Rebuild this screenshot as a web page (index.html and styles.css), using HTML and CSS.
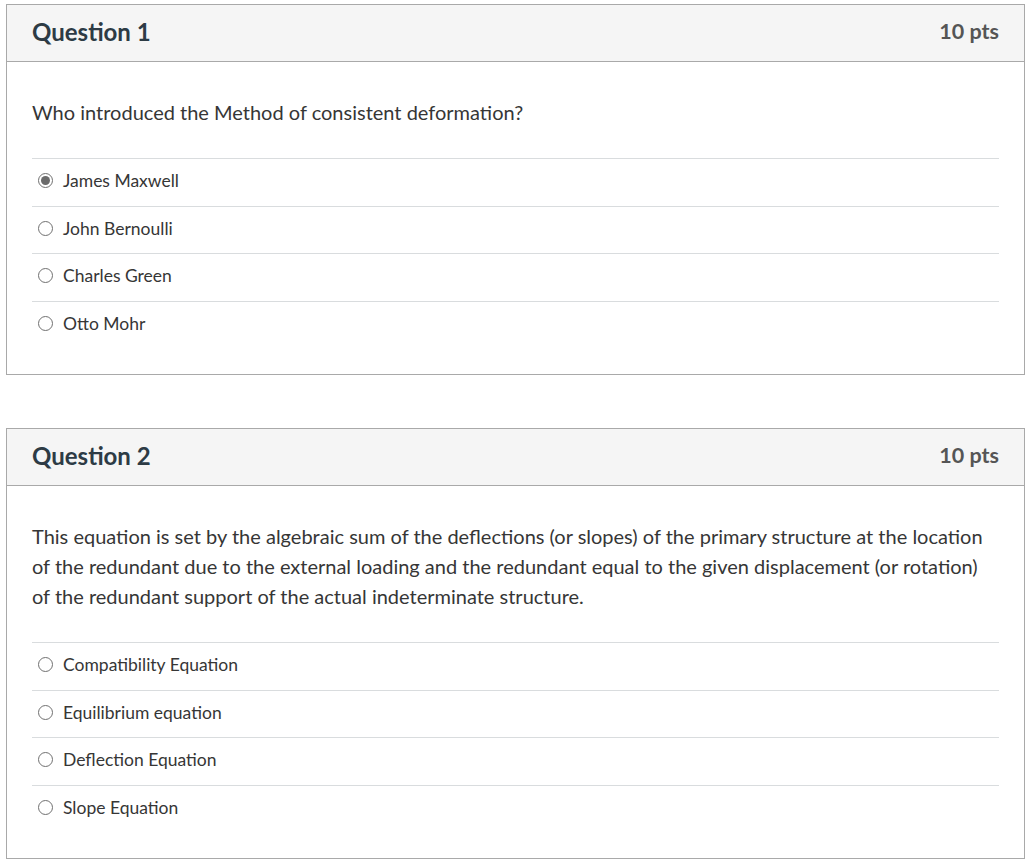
FILE: index.html
```html
<!DOCTYPE html>
<html>
<head>
<meta charset="utf-8">
<link rel="stylesheet" href="styles.css">
</head>
<body>
<div class="quiz">
  <section class="card">
    <header class="card-head">
      <h2 class="title">Question 1</h2>
      <span class="pts">10 pts</span>
    </header>
    <div class="card-body">
      <p class="question">Who introduced the Method of consistent deformation?</p>
      <ul class="answers">
        <li class="answer"><span class="radio checked"></span><span>James Maxwell</span></li>
        <li class="answer"><span class="radio"></span><span>John Bernoulli</span></li>
        <li class="answer"><span class="radio"></span><span>Charles Green</span></li>
        <li class="answer"><span class="radio"></span><span>Otto Mohr</span></li>
      </ul>
    </div>
  </section>
  <section class="card">
    <header class="card-head">
      <h2 class="title">Question 2</h2>
      <span class="pts">10 pts</span>
    </header>
    <div class="card-body">
      <p class="question">This equation is set by the algebraic sum of the deflections (or slopes) of the primary structure at the location of the redundant due to the external loading and the redundant equal to the given displacement (or rotation) of the redundant support of the actual indeterminate structure.</p>
      <ul class="answers">
        <li class="answer"><span class="radio"></span><span>Compatibility Equation</span></li>
        <li class="answer"><span class="radio"></span><span>Equilibrium equation</span></li>
        <li class="answer"><span class="radio"></span><span>Deflection Equation</span></li>
        <li class="answer"><span class="radio"></span><span>Slope Equation</span></li>
      </ul>
    </div>
  </section>
</div>
</body>
</html>
```
FILE: styles.css
```css
html, body {
  margin: 0;
  padding: 0;
  background: #fff;
}
body {
  font-family: Lato, "Open Sans", sans-serif;
  color: #2d3b45;
}
.quiz {
  padding: 4px 6px 0 6px;
  display: flex;
  flex-direction: column;
  gap: 53px;
}
.card {
  width: 1019px;
  box-sizing: border-box;
  border: 1px solid #a9a9a9;
}
.card-head {
  box-sizing: border-box;
  height: 57px;
  background: #f5f5f5;
  border-bottom: 1px solid #a9a9a9;
  display: flex;
  align-items: center;
  justify-content: space-between;
  padding: 0 25px 4px 25px;
}
.title {
  margin: 0;
  font-size: 24px;
  font-weight: 700;
  color: #2d3b45;
}
.pts {
  font-size: 21.5px;
  font-weight: 700;
  color: #555;
}
.card-body {
  padding: 35px 25px 26px 25px;
}
.question {
  margin: 0 0 31px 0;
  font-size: 20px;
  line-height: 30px;
  color: #363636;
}
.answers {
  list-style: none;
  margin: 0;
  padding: 0;
}
.answer {
  height: 47.5px;
  box-sizing: border-box;
  border-top: 1px solid #d9dcde;
  display: flex;
  align-items: center;
  padding: 0 0 3px 6px;
  font-size: 17.5px;
  color: #363636;
}
.radio {
  flex: none;
  width: 15px;
  height: 15px;
  box-sizing: border-box;
  border: 1px solid #707070;
  border-radius: 50%;
  margin: 0 10px 0 0;
  display: flex;
  align-items: center;
  justify-content: center;
  background: #fff;
}
.radio.checked::after {
  content: "";
  width: 9px;
  height: 9px;
  border-radius: 50%;
  background: #6b6b6b;
}
```
